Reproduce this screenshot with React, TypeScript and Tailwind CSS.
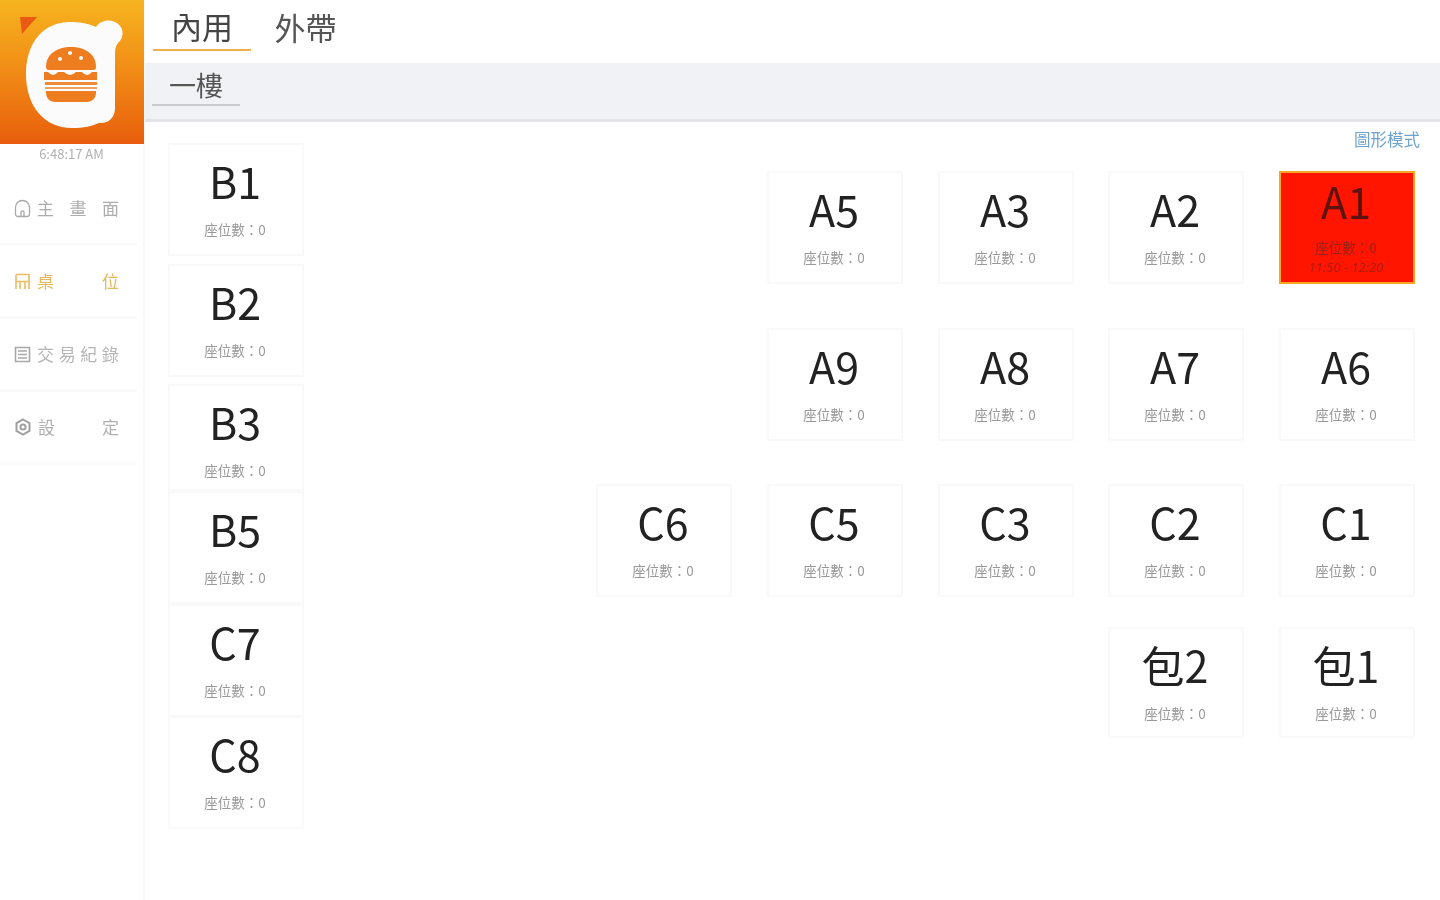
const FONT = "font-['Noto_Sans_CJK_TC','Noto_Sans',sans-serif]";

type Table = {
  name: string;
  x: number;
  y: number;
  h?: number;
  busy?: string;
};

const tables: Table[] = [
  { name: "B1", x: 168, y: 143 },
  { name: "B2", x: 168, y: 264 },
  { name: "B3", x: 168, y: 384, h: 107 },
  { name: "B5", x: 168, y: 491 },
  { name: "C7", x: 168, y: 604 },
  { name: "C8", x: 168, y: 716 },
  { name: "A5", x: 767, y: 171 },
  { name: "A3", x: 938, y: 171 },
  { name: "A2", x: 1108, y: 171 },
  { name: "A1", x: 1279, y: 171, busy: "11:50 - 12:20" },
  { name: "A9", x: 767, y: 328 },
  { name: "A8", x: 938, y: 328 },
  { name: "A7", x: 1108, y: 328 },
  { name: "A6", x: 1279, y: 328 },
  { name: "C6", x: 596, y: 484 },
  { name: "C5", x: 767, y: 484 },
  { name: "C3", x: 938, y: 484 },
  { name: "C2", x: 1108, y: 484 },
  { name: "C1", x: 1279, y: 484 },
  { name: "包2", x: 1108, y: 627, h: 111 },
  { name: "包1", x: 1279, y: 627, h: 111 },
];

const Logo = () => (
  <div className="h-[144px] w-[144px] bg-gradient-to-b from-[#f6b41f] to-[#e85d0c]">
    <svg width="144" height="144" viewBox="0 0 144 144">
      <path d="M20 17 L37 17 L22 34 Z" fill="#ea5a12" />
      <path
        d="M70 22 C78 22 88 23 96 27 C100 21 108 19 115 22 C124 26 125 37 118 43 C116 46 115 48 115 54 L115 108 C115 118 108 124 99 123 C92 126 84 128 72 128 C44 128 26 106 26 74 C26 42 44 22 70 22 Z"
        fill="#fbfbfb"
      />
      <path
        d="M46 67 C46 54 57 47 71 47 C85 47 96 54 96 67 C96 69 95 70 93 70 L49 70 C47 70 46 69 46 67 Z"
        fill="#ee7d1f"
      />
      <circle cx="60" cy="59" r="2" fill="#fbfbfb" />
      <circle cx="70" cy="53" r="2" fill="#fbfbfb" />
      <circle cx="81" cy="58" r="2" fill="#fbfbfb" />
      <path
        d="M44 72 L97 72 L97 80 L44 80 Z"
        fill="#ee7d1f"
      />
      <path
        d="M48 72 Q53 78 58 72 Z M64 72 Q70 78 76 72 Z M82 72 Q87 78 92 72 Z"
        fill="#fbfbfb"
      />
      <rect x="45" y="82" width="52" height="3" fill="#ee8a3a" />
      <rect x="45" y="87" width="52" height="2" fill="#f0a060" />
      <path
        d="M46 91 L96 91 L96 93 C96 98 92 102 87 102 L55 102 C50 102 46 98 46 93 Z"
        fill="#ee7d1f"
      />
    </svg>
  </div>
);

const HomeIcon = () => (
  <svg width="17" height="19" viewBox="0 0 17 19" fill="none" stroke="#a8a8a8" strokeWidth="1.3">
    <path d="M1.5 15 V8.5 C1.5 4.5 4.5 1.5 8.5 1.5 C12.5 1.5 15.5 4.5 15.5 8.5 V15 C15.5 16.5 14.5 17.5 13 17.5 H4 C2.5 17.5 1.5 16.5 1.5 15 Z" />
    <path d="M7 17 V13 C7 11.5 10 11.5 10 13 V17" />
  </svg>
);

const SeatIcon = () => (
  <svg width="17" height="19" viewBox="0 0 17 19" fill="none" stroke="#e9bd63" strokeWidth="1.6">
    <path d="M2 2.5 H15 V17 M2 2.5 V17 M2 9.5 H15 M6 9.5 V17 M11 9.5 V17" />
  </svg>
);

const RecordIcon = () => (
  <svg width="17" height="19" viewBox="0 0 17 19" fill="none" stroke="#a8a8a8" strokeWidth="1.6">
    <path d="M1.5 2.5 H15.5 V16.5 H1.5 Z M4 6 H13 M4 9.5 H13 M4 13 H13" />
  </svg>
);

const GearIcon = () => (
  <svg width="18" height="18" viewBox="0 0 18 18" fill="none" stroke="#a0a0a0" strokeWidth="2">
    <path d="M9 1.5 L15.5 5.2 V12.8 L9 16.5 L2.5 12.8 V5.2 Z" />
    <circle cx="9" cy="9" r="2.6" />
  </svg>
);

const navItems = [
  { icon: <HomeIcon />, chars: ["主", "畫", "面"], color: "text-[#adadad]" },
  { icon: <SeatIcon />, chars: ["桌", "位"], color: "text-[#e6b85c]" },
  { icon: <RecordIcon />, chars: ["交", "易", "紀", "錄"], color: "text-[#b5b5b5]" },
  { icon: <GearIcon />, chars: ["設", "定"], color: "text-[#b0b0b0]" },
];

const Sidebar = () => (
  <aside className="flex w-[145px] shrink-0 flex-col border-r-2 border-[#f8f8f8]">
    <Logo />
    <p className="h-[19px] text-center text-[13px] leading-[19px] text-[#b0b0b0]">6:48:17 AM</p>
    <nav className="mt-[10px] pr-[6px]">
      {navItems.map((item, i) => (
        <div
          key={i}
          className={`flex h-[73px] items-center gap-[6px] border-b-[3px] border-[#fafafa] pl-[14px] pr-[18px] text-[17px] ${item.color}`}
        >
          {item.icon}
          <div className="flex flex-1 justify-between">
            {item.chars.map((c) => (
              <span key={c}>{c}</span>
            ))}
          </div>
        </div>
      ))}
    </nav>
  </aside>
);

const TableCard = ({ t }: { t: Table }) => (
  <div
    style={{ left: t.x - 145, top: t.y, width: 136, height: t.h ?? 113 }}
    className={`absolute flex flex-col items-center border-2 pr-[2px] ${
      t.busy ? "border-[#f5a623] bg-[#ff1500] text-[#5e120e]" : "border-[#f9f9f9] bg-white text-[#222]"
    }`}
  >
    <span className={`text-[43px] leading-[60px] ${t.busy ? "-mt-[3px]" : "mt-[5px]"}`}>{t.name}</span>
    <span className={`text-[13.5px] leading-[16px] ${t.busy ? "mt-[9px] text-[#9c2018]" : "mt-[11px] text-[#999]"}`}>
      座位數：0
    </span>
    {t.busy && (
      <span className="mt-[4px] font-['Noto_Sans',sans-serif] text-[13px] italic leading-[16px] text-[#b01c10]">
        {t.busy}
      </span>
    )}
  </div>
);

export default function App() {
  return (
    <div className={`flex h-[900px] w-[1440px] overflow-hidden bg-white blur-[0.7px] ${FONT}`}>
      <Sidebar />
      <main className="relative flex-1">
        <div className="flex h-[63px] items-start pl-[8px]">
          <div className="flex h-[51px] w-[98px] items-center justify-center border-b-2 border-[#eeb04e] pt-[2px] text-[31px] leading-none text-[#444]">
            內用
          </div>
          <div className="flex h-[51px] w-[109px] items-center justify-center pt-[2px] text-[31px] leading-none text-[#555]">
            外帶
          </div>
        </div>
        <div className="h-[59px] border-b-[3px] border-[#e4e5e8] bg-[#f1f2f5] pl-[7px]">
          <div className="flex h-[43px] w-[88px] items-center justify-center border-b-2 border-[#c9cacd] pt-[2px] text-[27px] leading-none text-[#555]">
            一樓
          </div>
        </div>
        <a className="absolute right-[20px] top-[128px] text-[16.5px] leading-[22px] text-[#6fa3cf]">圖形模式</a>
        {tables.map((t) => (
          <TableCard key={t.name} t={t} />
        ))}
      </main>
    </div>
  );
}
